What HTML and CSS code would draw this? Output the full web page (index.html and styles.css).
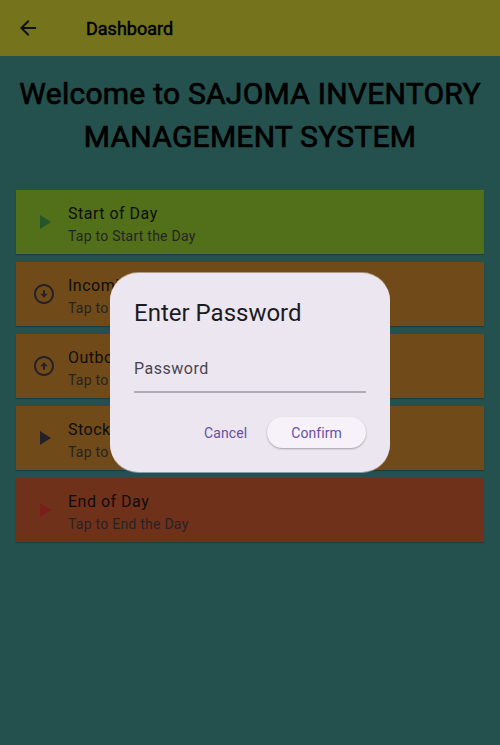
FILE: index.html
```html
<!DOCTYPE html>
<html lang="en">
<head>
<meta charset="utf-8">
<title>Dashboard</title>
<link rel="stylesheet" href="styles.css">
</head>
<body>
<header class="appbar">
  <svg class="icon back" viewBox="0 0 24 24"><path d="M20 11H7.83l5.59-5.59L12 4l-8 8 8 8 1.41-1.41L7.83 13H20v-2z"/></svg>
  <h1 class="appbar-title">Dashboard</h1>
</header>
<main class="content">
  <h2 class="welcome"><span class="line line-one">Welcome to SAJOMA INVENTORY</span><span class="line line-two">MANAGEMENT SYSTEM</span></h2>
  <ul class="tiles">
    <li class="tile tile-start">
      <svg class="icon" viewBox="0 0 24 24"><path d="M8 5v14l11-7z"/></svg>
      <div class="tile-text"><p class="tile-title">Start of Day</p><p class="tile-sub">Tap to Start the Day</p></div>
    </li>
    <li class="tile">
      <svg class="icon" viewBox="0 0 24 24"><path d="M12 4c4.41 0 8 3.59 8 8s-3.59 8-8 8-8-3.59-8-8 3.59-8 8-8m0-2C6.48 2 2 6.48 2 12s4.48 10 10 10 10-4.48 10-10S17.52 2 12 2zm1 9.700V8.300h-2v3.400H8.300L12 15.700l3.700-4z"/></svg>
      <div class="tile-text"><p class="tile-title">Incoming</p><p class="tile-sub">Tap to</p></div>
    </li>
    <li class="tile">
      <svg class="icon" viewBox="0 0 24 24"><path d="M12 20c-4.410 0-8-3.590-8-8s3.590-8 8-8 8 3.590 8 8-3.590 8-8 8m0 2c5.520 0 10-4.480 10-10S17.520 2 12 2 2 6.480 2 12s4.480 10 10 10zm-1-9.700v3.400h2v-3.400h2.700L12 8.300l-3.700 4z"/></svg>
      <div class="tile-text"><p class="tile-title">Outbound</p><p class="tile-sub">Tap to</p></div>
    </li>
    <li class="tile">
      <svg class="icon" viewBox="0 0 24 24"><path d="M8 5v14l11-7z"/></svg>
      <div class="tile-text"><p class="tile-title">Stock</p><p class="tile-sub">Tap to</p></div>
    </li>
    <li class="tile tile-end">
      <svg class="icon" viewBox="0 0 24 24"><path d="M8 5v14l11-7z"/></svg>
      <div class="tile-text"><p class="tile-title">End of Day</p><p class="tile-sub">Tap to End the Day</p></div>
    </li>
  </ul>
</main>
<div class="overlay">
  <section class="dialog" role="dialog">
    <h3 class="dialog-title">Enter Password</h3>
    <div class="field">Password</div>
    <div class="actions">
      <button class="btn">Cancel</button>
      <button class="btn btn-raised">Confirm</button>
    </div>
  </section>
</div>
</body>
</html>
```
FILE: styles.css
```css
* { box-sizing: border-box; margin: 0; padding: 0; }
body {
  height: 745px;
  overflow: hidden;
  background: #24504d;
  font-family: Roboto, "Liberation Sans", sans-serif;
  font-weight: 400;
}
.icon { width: 24px; height: 24px; flex: none; fill: #242228; }
.appbar {
  display: flex;
  align-items: center;
  gap: 46px;
  height: 56px;
  padding: 0 16px;
  background: #75731c;
}
.appbar .icon { fill: #100f12; }
.appbar-title {
  font-size: 18px;
  font-weight: 400;
  line-height: 24px;
  color: #000;
  -webkit-text-stroke: 0.5px #000;
  padding-top: 1px;
}
.content { padding: 16px; }
.welcome {
  display: flex;
  flex-direction: column;
  align-items: center;
  height: 118px;
  font-size: 30px;
  font-weight: 400;
  line-height: 43px;
  letter-spacing: 0.25px;
  white-space: nowrap;
  color: #000;
  -webkit-text-stroke: 0.7px #000;
}
.tiles { display: flex; flex-direction: column; gap: 8px; list-style: none; }
.tile {
  display: flex;
  align-items: center;
  gap: 12px;
  height: 64px;
  padding: 0 16px;
  background: #704b19;
  box-shadow: 0 1px 1px rgba(0, 0, 0, 0.22);
}
.tile-start { background: #526f19; }
.tile-end { background: #70311b; }
.tile-start .icon { fill: #23572b; }
.tile-end .icon { fill: #781f1c; }
.tile-text { padding-top: 3px; }
.tile-title { font-size: 16px; line-height: 24px; letter-spacing: 0.5px; color: #0e0d0f; }
.tile-sub { font-size: 14px; line-height: 20px; letter-spacing: 0.25px; color: #252327; }
.overlay {
  position: absolute;
  inset: 0;
  display: flex;
  align-items: center;
  justify-content: center;
}
.dialog {
  width: 280px;
  height: 199px;
  padding: 24px;
  border-radius: 28px;
  background: #ece6f0;
  box-shadow: 0 -1px 0 rgba(236, 230, 240, 0.5), 0 1px 0 rgba(236, 230, 240, 0.5);
}
.dialog-title { font-size: 24px; font-weight: 400; line-height: 32px; color: #1d1b20; }
.field {
  height: 48px;
  margin-top: 16px;
  padding-top: 12px;
  border-bottom: 2px solid #b0abb7;
  font-size: 16px;
  line-height: 24px;
  letter-spacing: 0.5px;
  color: #49454f;
}
.actions { display: flex; justify-content: flex-end; gap: 8px; margin-top: 24px; }
.btn {
  height: 31px;
  padding: 1px 12px 0;
  border: 0;
  border-radius: 16px;
  background: transparent;
  font: 400 14px/20px Roboto, "Liberation Sans", sans-serif;
  letter-spacing: 0.1px;
  color: #6750a4;
}
.btn-raised {
  padding: 1px 24px 0;
  background: #f7f2fa;
  box-shadow: 0 1px 2px rgba(0, 0, 0, 0.3);
}
```
